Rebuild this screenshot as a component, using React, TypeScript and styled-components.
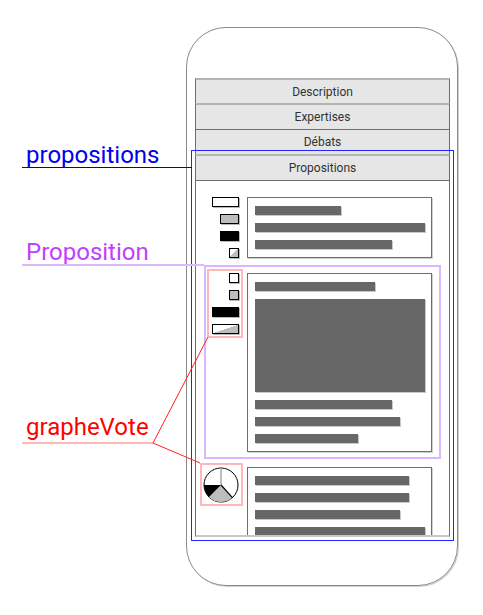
import styled, { createGlobalStyle } from "styled-components";

const GlobalStyle = createGlobalStyle`
  body {
    margin: 0;
    background: #fff;
    font-family: Roboto, "Liberation Sans", sans-serif;
  }
`;

type Row = {
  note?: boolean;
  votes: "bars" | "barsTall" | "pie";
  lines: number[];
  image?: boolean;
  after?: number[];
};

const rows: Row[] = [
  { votes: "bars", lines: [86, 170, 137] },
  { note: true, votes: "barsTall", lines: [120], image: true, after: [137, 145, 103] },
  { votes: "pie", lines: [154, 154, 145, 170] },
];

const tabs = [
  { label: "Description", h: 25, edge: "light" },
  { label: "Expertises", h: 26, edge: "light" },
  { label: "Débats", h: 25, edge: "dark" },
];

const VoteBars = ({ tall }: { tall?: boolean }) => (
  <>
    <Chip $w={tall ? 10 : 27} />
    <Chip $w={tall ? 10 : 19} $fill="#bdbdbd" />
    <Chip $w={tall ? 27 : 19} $fill="#000" />
    <Chip $w={tall ? 27 : 10} $fill="linear-gradient(to bottom right, #fff 50%, #bdbdbd 50%)" />
  </>
);

const Pie = () => (
  <svg width="36" height="36" viewBox="0 0 36 36">
    <circle cx="18" cy="18" r="17" fill="#fff" stroke="#000" strokeWidth="1" />
    <path d="M18 18 L29.4 30.6 A17 17 0 0 1 6 30 Z" fill="#bdbdbd" />
    <path d="M18 18 L6 30 A17 17 0 0 1 1 18 Z" fill="#000" />
    <line x1="18" y1="18" x2="18" y2="1" stroke="#aaa" strokeWidth="1.5" />
    <line x1="18" y1="18" x2="29.4" y2="30.6" stroke="#000" strokeWidth="1.2" />
  </svg>
);

const App = () => {
  return (
    <Page>
      <GlobalStyle />
      <Phone>
        {tabs.map((t) => (
          <Tab key={t.label} $h={t.h} $edge={t.edge}>
            {t.label}
          </Tab>
        ))}
        <Annotated>
          <Tab $h={27} $edge="light" $last>
            Propositions
          </Tab>
          <Panel>
            {rows.map((row, i) => (
              <PropRow key={i} $note={row.note}>
                <VoteCol>
                  <VoteBox $note={row.votes !== "bars"} $pie={row.votes === "pie"}>
                    {row.votes === "pie" ? <Pie /> : <VoteBars tall={row.votes === "barsTall"} />}
                  </VoteBox>
                </VoteCol>
                <Card>
                  {row.lines.map((w, j) => (
                    <Line key={j} $w={w} />
                  ))}
                  {row.image && <Picture />}
                  {row.after?.map((w, j) => (
                    <Line key={"a" + j} $w={w} />
                  ))}
                </Card>
              </PropRow>
            ))}
          </Panel>
        </Annotated>
      </Phone>

      <Label $color="#0000f0" $top={143}>propositions</Label>
      <Label $color="#bf40ff" $top={240}>Proposition</Label>
      <Label $color="#ff0000" $top={415}>grapheVote</Label>

      <Leaders width="483" height="615" viewBox="0 0 483 615">
        <line x1="22" y1="167.5" x2="192" y2="167.5" stroke="#0000c8" strokeWidth="1" />
        <line x1="22" y1="265" x2="204" y2="265" stroke="#dcb8ff" strokeWidth="2" />
        <line x1="22" y1="443" x2="153" y2="443" stroke="#ffb8b8" strokeWidth="2" />
        <line x1="153" y1="443" x2="208" y2="337" stroke="#ff2020" strokeWidth="1" />
        <line x1="153" y1="443" x2="200" y2="463" stroke="#ff2020" strokeWidth="1" />
      </Leaders>
    </Page>
  );
};

const Page = styled.div`
  position: relative;
  width: 483px;
  height: 615px;
  box-sizing: border-box;
  padding: 27px 0 0 186px;
  overflow: hidden;
`;

const Phone = styled.div`
  width: 272px;
  height: 559px;
  box-sizing: border-box;
  border: 1px solid #8a8a8a;
  border-radius: 40px;
  box-shadow: 1px 1px 0 #cfcfcf;
  padding: 50px 7px 0 8px;
  display: flex;
  flex-direction: column;
`;

const Tab = styled.div<{ $h: number; $edge: string; $last?: boolean }>`
  height: ${(p) => p.$h}px;
  box-sizing: border-box;
  background: #e6e6e6;
  border-left: 1px solid #6e6e6e;
  border-right: 1px solid #6e6e6e;
  border-top: ${(p) => (p.$edge === "dark" ? "1px solid #6e6e6e" : "2px solid #b4b4b4")};
  border-bottom: ${(p) => (p.$last ? "1px solid #6e6e6e" : "none")};
  display: flex;
  align-items: center;
  justify-content: center;
  font-size: 12px;
  color: #333;
`;

const Annotated = styled.div`
  outline: 1px solid #2424ff;
  outline-offset: 3px;
  display: flex;
  flex-direction: column;
`;

const Panel = styled.div`
  height: 356px;
  box-sizing: border-box;
  border-left: 1px solid #6e6e6e;
  border-right: 1px solid #6e6e6e;
  border-bottom: 2px solid #c8c8c8;
  padding-top: 8px;
  overflow: hidden;
  display: flex;
  flex-direction: column;
`;

const PropRow = styled.div<{ $note?: boolean }>`
  margin: 0 8px;
  border: 2px solid ${(p) => (p.$note ? "#dcb4ff" : "transparent")};
  padding: 2px 7px 5px 0;
  display: flex;
  align-items: flex-start;
  gap: 4px;
  flex-shrink: 0;
`;

const VoteCol = styled.div`
  width: 37px;
  flex-shrink: 0;
  margin-bottom: -4px;
  display: flex;
  justify-content: flex-end;
`;

const VoteBox = styled.div<{ $note?: boolean; $pie?: boolean }>`
  flex-shrink: 0;
  width: ${(p) => (p.$pie ? 43 : 36)}px;
  box-sizing: border-box;
  border: 2px solid ${(p) => (p.$note ? "#ffb8b8" : "transparent")};
  padding: ${(p) => (p.$pie ? "2px 2px 1px 1px" : "2px 2px 2px 2px")};
  display: flex;
  flex-direction: column;
  align-items: flex-end;
  gap: 7px;
`;

const Chip = styled.div<{ $w: number; $fill?: string }>`
  width: ${(p) => p.$w}px;
  height: 10px;
  box-sizing: border-box;
  border: 1px solid #000;
  background: ${(p) => p.$fill || "#fff"};
  box-shadow: 1px 1px 0 #b8b8b8;
`;

const Card = styled.div`
  width: 185px;
  flex-shrink: 0;
  margin-top: 4px;
  box-sizing: border-box;
  border: 1px solid #6e6e6e;
  box-shadow: 1px 1px 0 #d0d0d0;
  padding: 8px 7px;
  display: flex;
  flex-direction: column;
  gap: 8px;
  background: #fff;
`;

const Line = styled.div<{ $w: number }>`
  width: ${(p) => p.$w}px;
  height: 9px;
  background: #676767;
  box-shadow: 1px 1px 0 #c8c8c8;
`;

const Picture = styled.div`
  width: 170px;
  height: 93px;
  background: #676767;
  box-shadow: 1px 1px 0 #c8c8c8;
`;

const Label = styled.div<{ $color: string; $top: number }>`
  position: absolute;
  left: 26px;
  top: ${(p) => p.$top}px;
  font-size: 24px;
  line-height: 1;
  color: ${(p) => p.$color};
`;

const Leaders = styled.svg`
  position: absolute;
  left: 0;
  top: 0;
  pointer-events: none;
`;

export default App;
